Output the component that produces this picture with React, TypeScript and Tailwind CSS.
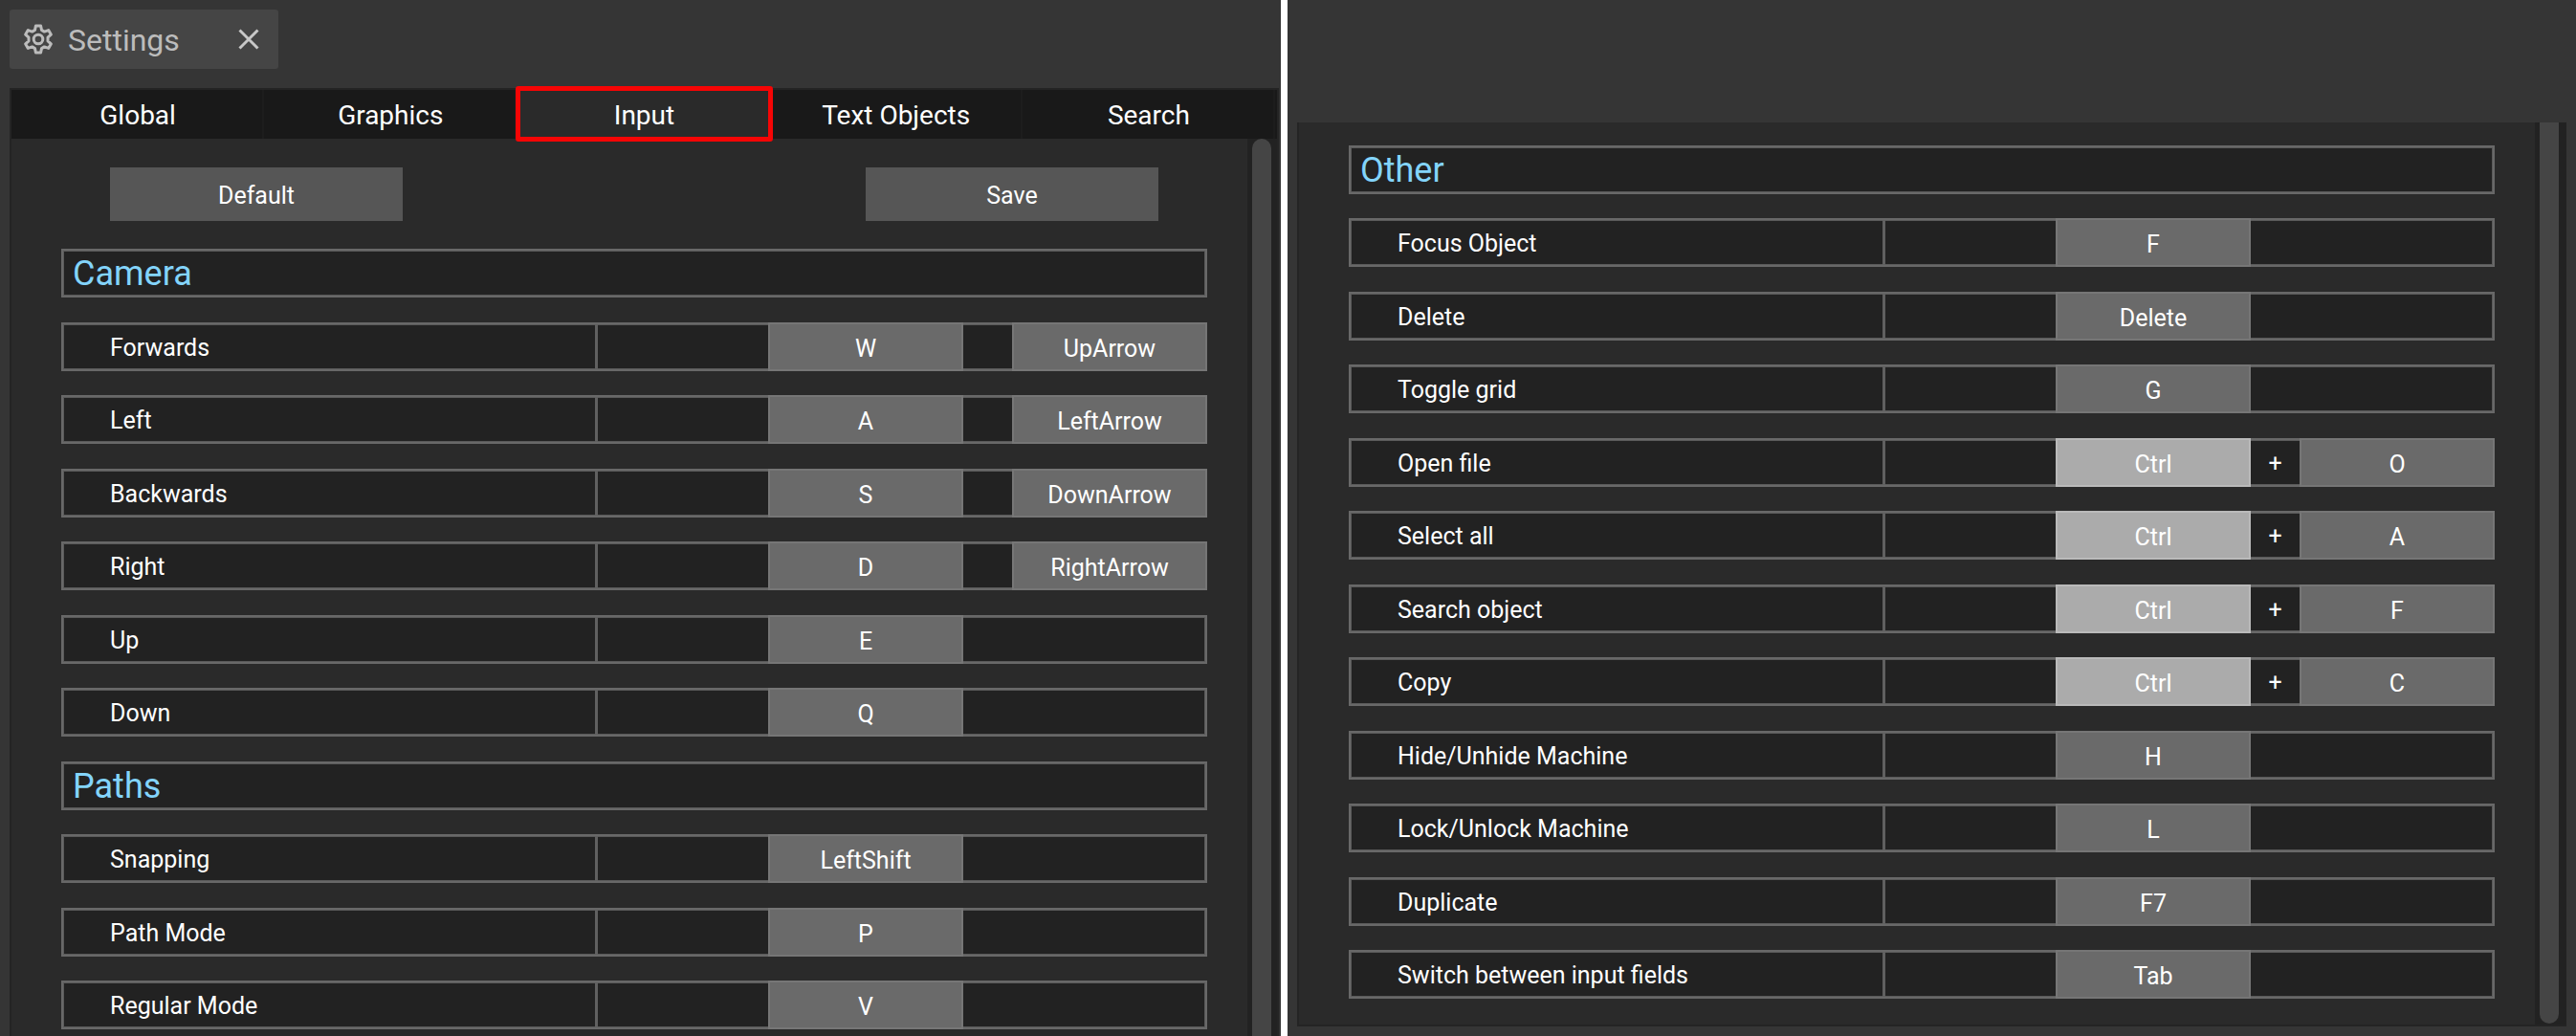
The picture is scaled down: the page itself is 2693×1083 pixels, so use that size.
import React from "react";

type Binding = { label: string; keys: string[]; combo?: boolean };
type Entry = { heading: string } | Binding;

const leftEntries: Entry[] = [
  { heading: "Camera" },
  { label: "Forwards", keys: ["W", "UpArrow"] },
  { label: "Left", keys: ["A", "LeftArrow"] },
  { label: "Backwards", keys: ["S", "DownArrow"] },
  { label: "Right", keys: ["D", "RightArrow"] },
  { label: "Up", keys: ["E"] },
  { label: "Down", keys: ["Q"] },
  { heading: "Paths" },
  { label: "Snapping", keys: ["LeftShift"] },
  { label: "Path Mode", keys: ["P"] },
  { label: "Regular Mode", keys: ["V"] },
];

const rightEntries: Entry[] = [
  { heading: "Other" },
  { label: "Focus Object", keys: ["F"] },
  { label: "Delete", keys: ["Delete"] },
  { label: "Toggle grid", keys: ["G"] },
  { label: "Open file", keys: ["Ctrl", "O"], combo: true },
  { label: "Select all", keys: ["Ctrl", "A"], combo: true },
  { label: "Search object", keys: ["Ctrl", "F"], combo: true },
  { label: "Copy", keys: ["Ctrl", "C"], combo: true },
  { label: "Hide/Unhide Machine", keys: ["H"] },
  { label: "Lock/Unlock Machine", keys: ["L"] },
  { label: "Duplicate", keys: ["F7"] },
  { label: "Switch between input fields", keys: ["Tab"] },
];

const tabs = ["Global", "Graphics", "Input", "Text Objects", "Search"];

function KeyButton({ name, modifier, label }: { name: string; modifier?: boolean; label: string }) {
  return (
    <button
      type="button"
      aria-label={`${label}: ${name}`}
      className={
        modifier
          ? "-my-[2px] border-2 border-[#bababa] bg-[#ababab] pt-1 text-center text-white"
          : "-my-[2px] border-2 border-[#767676] bg-[#6a6a6a] pt-1 text-center text-white"
      }
    >
      {name}
    </button>
  );
}

function BindingRow({ label, keys, combo }: Binding) {
  return (
    <div className="-mx-[2px] grid h-full grid-cols-[561fr_178fr_204fr_51fr_204fr] text-[25px] leading-[40px]">
      <div className="flex items-center border-r-[3px] border-[#606060] pl-[51px] pt-[3px] text-white">{label}</div>
      <div />
      <KeyButton name={keys[0]} modifier={combo} label={label} />
      <div className="flex items-center justify-center pt-[3px] text-white">{combo ? "+" : ""}</div>
      {keys[1] && <KeyButton name={keys[1]} label={label} />}
    </div>
  );
}

function EntryList({ entries, className }: { entries: Entry[]; className: string }) {
  return (
    <div className={className}>
      {entries.map((e, i) => (
        <div
          key={i}
          className="h-[51px] shrink-0 border-2 border-[#686868] bg-[#222222] shadow-[inset_0_0_0_1px_#5a5a5a]"
        >
          {"heading" in e ? (
            <h2 className="pl-[10px] text-[36px] leading-[48px] text-[#83d4fb]">{e.heading}</h2>
          ) : (
            <BindingRow {...e} />
          )}
        </div>
      ))}
    </div>
  );
}

function GearIcon() {
  return (
    <svg viewBox="0 0 30 32" className="h-8 w-[30px]" fill="none" stroke="#bcbcbc" strokeWidth="3" strokeLinejoin="round" aria-hidden="true">
      <path d="M12.4 2h5.2l.9 4.4 2.9 1.7 4.3-1.5 2.6 4.5-3.3 3v3.8l3.3 3-2.6 4.5-4.3-1.5-2.9 1.7-.9 4.4h-5.2l-.9-4.4-2.9-1.7-4.3 1.5-2.6-4.5 3.3-3v-3.8l-3.3-3 2.6-4.5 4.3 1.5 2.9-1.7z" />
      <circle cx="15" cy="16" r="4.8" />
    </svg>
  );
}

export default function App() {
  return (
    <main className="grid h-screen grid-cols-[1339fr_1347fr] gap-[7px] overflow-hidden bg-white font-['Roboto',sans-serif]">
      <section className="flex min-h-0 flex-col overflow-hidden bg-[#353535] pl-[10px] pr-[2px] pt-[10px]">
        <div className="flex h-[62px] w-[281px] shrink-0 items-center rounded-[3px] bg-[#454545] pl-[15px] pr-5">
          <GearIcon />
          <span className="ml-4 pt-[2px] text-[32px] leading-[44px] text-[#bcbcbc]">Settings</span>
          <button type="button" aria-label="Close settings" className="ml-auto text-[#c8c8c8]">
            <svg viewBox="0 0 22 22" className="size-[22px]" stroke="currentColor" strokeWidth="3" aria-hidden="true">
              <path d="M1.5 1.5l19 19M20.5 1.5l-19 19" />
            </svg>
          </button>
        </div>
        <div className="mt-5 flex min-h-0 flex-1 flex-col border-x-2 border-t-2 border-[#242424] bg-[#2a2a2a]">
          <div role="tablist" className="grid h-[51px] shrink-0 grid-cols-5 bg-[#191919] pr-[2px]">
            {tabs.map((t) => (
              <button
                key={t}
                type="button"
                role="tab"
                aria-selected={t === "Input"}
                className={
                  t === "Input"
                    ? "-mb-[3px] -ml-[1px] -mr-[3px] -mt-1 rounded-[3px] border-[5px] border-[#f60505] bg-[#2a2a2a] pt-[3px] text-[28px] leading-[40px] text-white"
                    : "border-r-2 border-[#1d1d1d] pl-[2px] pt-[2px] text-[28px] leading-[40px] text-white"
                }
              >
                {t}
              </button>
            ))}
          </div>
          <div className="flex min-h-0 flex-1">
            <div className="min-w-0 flex-1 overflow-hidden pl-[52px] pr-[42px] pt-[30px]">
              <div className="flex justify-between px-[51px] text-[25px] text-white">
                <button type="button" className="h-14 w-[306px] bg-[#565656] pt-1">Default</button>
                <button type="button" className="h-14 w-[306px] bg-[#565656] pt-1">Save</button>
              </div>
              <EntryList
                entries={leftEntries}
                className="mt-[29px] flex flex-col *:odd:mb-[26px] *:even:mb-[25px]"
              />
            </div>
            <div className="w-[31px] bg-[#222222] pl-[5px]">
              <div className="h-full w-5 rounded-t-full bg-[#454545]" />
            </div>
          </div>
        </div>
      </section>

      <section className="min-h-0 bg-[#353535] pb-[10px] pl-[10px] pr-[10px] pt-32">
        <div className="flex h-full border-b-2 border-l-2 border-[#242424] bg-[#2a2a2a]">
          <div className="min-w-0 flex-1 overflow-hidden pl-[52px] pr-[42px] pt-6">
            <EntryList
              entries={rightEntries}
              className="flex flex-col *:odd:mb-[25px] *:even:mb-[26px]"
            />
          </div>
          <div className="w-[33px] bg-[#222222] pb-[1px] pl-[5px]">
            <div className="h-full w-5 rounded-b-full bg-[#454545]" />
          </div>
        </div>
      </section>
    </main>
  );
}
